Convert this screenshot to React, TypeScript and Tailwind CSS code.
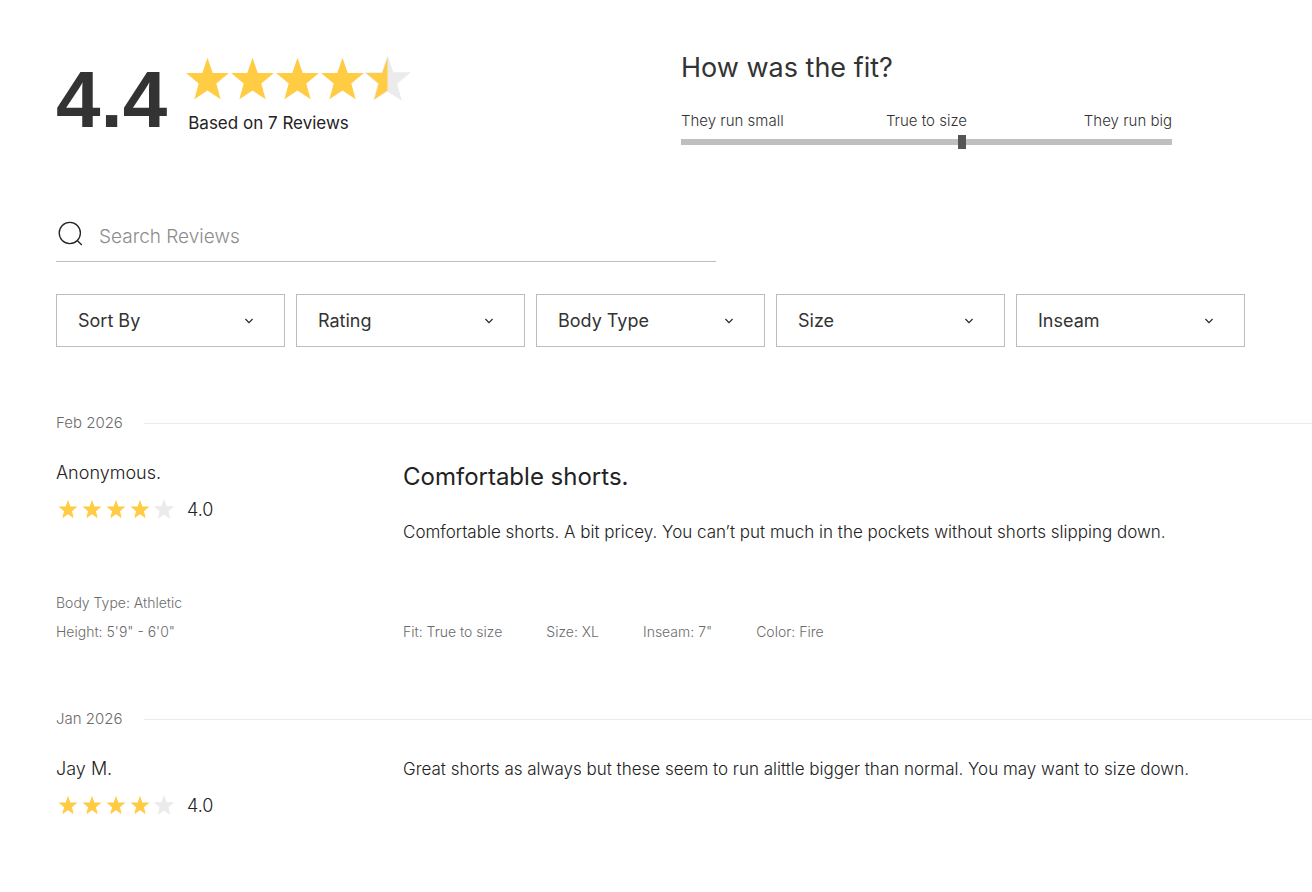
import React from "react";

const STAR =
  "M12 0.9 L14.8 9 L23.4 9.1 L16.7 14.6 L19 23 L12 18.4 L5 23 L7.3 14.6 L0.6 9.1 L9.2 9 Z";
const LEFT_HALF = "M12 0.9 L12 18.4 L5 23 L7.3 14.6 L0.6 9.1 L9.2 9 Z";

function Star({ size, fill }: { size: string; fill: "full" | "half" | "empty" }) {
  const full = fill === "full";
  return (
    <svg viewBox="0 0 24 24" className={`${size} shrink-0 overflow-visible`} aria-hidden="true">
      <path
        d={STAR}
        fill={full ? "#ffcc44" : "#ebebeb"}
        stroke={full ? "none" : "#ebebeb"}
        strokeWidth="0.8"
      />
      {fill === "half" && <path d={LEFT_HALF} fill="#ffcc44" />}
    </svg>
  );
}

function Filter({ label }: { label: string }) {
  return (
    <div className="relative h-[53px] flex-1">
      <select
        aria-label={label}
        className="h-full w-full appearance-none rounded-none border border-[#bdbdbd] bg-white px-[21px] text-[18px] text-[#333333]"
      >
        <option>{label}</option>
      </select>
      <svg
        viewBox="0 0 10 6"
        className="pointer-events-none absolute right-[31px] top-6 h-[6px] w-[10px]"
        fill="none"
        stroke="#222222"
        strokeWidth="1.1"
        aria-hidden="true"
      >
        <path d="M1.4 1 L5 4.6 L8.6 1" />
      </svg>
    </div>
  );
}

type ReviewProps = {
  date: string;
  name: string;
  title?: string;
  text: string;
  person?: string[];
  details?: string[];
};

function Review({ date, name, title, text, person, details }: ReviewProps) {
  return (
    <article className="mb-[61px]">
      <div className="flex h-6 items-center gap-5 text-[15px] font-light text-[#6b6b6b]">
        <time className="w-[68px] whitespace-nowrap">{date}</time>
        <div className="h-px flex-1 bg-[#ebebeb]" />
      </div>
      <div className="mt-[25px] grid grid-cols-[347px_1fr] text-[17px] font-light text-[#222222]">
        <div>
          <p className="text-[18px] leading-[26px]">{name}</p>
          <div className="mt-[11px] flex h-6 items-center">
            <div className="flex" role="img" aria-label="4 out of 5 stars">
              {[0, 1, 2, 3, 4].map((i) => (
                <div key={i} className="flex w-6 justify-center">
                  <Star size="size-5" fill={i < 4 ? "full" : "empty"} />
                </div>
              ))}
            </div>
            <span className="ml-[11px] text-[18px]">4.0</span>
          </div>
        </div>
        <div className="pr-10">
          {title && <h3 className="mb-[25px] text-[24px] leading-[34px] font-normal">{title}</h3>}
          <p className="leading-[26px]">{text}</p>
        </div>
      </div>
      {person && details && (
        <div className="mt-[43px] grid grid-cols-[347px_1fr] items-end text-[14px] leading-[29px] font-light text-[#6b6b6b]">
          <div>
            {person.map((line) => (
              <p key={line}>{line}</p>
            ))}
          </div>
          <ul className="flex gap-11">
            {details.map((d) => (
              <li key={d}>{d}</li>
            ))}
          </ul>
        </div>
      )}
    </article>
  );
}

export default function App() {
  return (
    <main className="bg-white pl-14 font-['Inter','Liberation_Sans',sans-serif] text-[#222222]">
      <header className="flex pt-[50px]">
        <div className="flex w-[625px] gap-[18px]">
          <div className="h-[100px] font-['Liberation_Sans',sans-serif] text-[80px] leading-[100px] font-bold text-[#333333]">
            4.4
          </div>
          <div>
            <div className="mt-[6px] flex" role="img" aria-label="4.4 out of 5 stars">
              {(["full", "full", "full", "full", "half"] as const).map((f, i) => (
                <Star key={i} size="size-[45px]" fill={f} />
              ))}
            </div>
            <p className="mt-[10px] pl-[3px] text-[17px] leading-6">Based on 7 Reviews</p>
          </div>
        </div>
        <div className="w-[491px] text-[#333333]">
          <h2 className="text-[27px] leading-9">How was the fit?</h2>
          <div className="mt-[25px] grid grid-cols-3 text-[15px] leading-5 font-light">
            <span>They run small</span>
            <label htmlFor="fit" className="text-center">
              True to size
            </label>
            <span className="text-right">They run big</span>
          </div>
          <input
            id="fit"
            type="range"
            min="0"
            max="1000"
            defaultValue="574"
            className="mt-1 block h-[14px] w-full appearance-none bg-transparent [&::-webkit-slider-runnable-track]:h-[6px] [&::-webkit-slider-runnable-track]:bg-[#bfbfbf] [&::-webkit-slider-thumb]:-mt-1 [&::-webkit-slider-thumb]:h-[14px] [&::-webkit-slider-thumb]:w-2 [&::-webkit-slider-thumb]:appearance-none [&::-webkit-slider-thumb]:bg-[#555555]"
          />
        </div>
      </header>

      <label className="mt-[60px] flex h-[52px] w-[660px] items-center gap-4 border-b border-[#bdbdbd]">
        <svg
          viewBox="0 0 26 26"
          className="mb-[3px] ml-[1px] size-[26px] shrink-0"
          fill="none"
          stroke="#222222"
          strokeWidth="1.3"
          aria-hidden="true"
        >
          <circle cx="12.8" cy="12" r="10.6" />
          <path d="M20.3 19.5 L24.8 24" />
        </svg>
        <input
          type="search"
          aria-label="Search Reviews"
          placeholder="Search Reviews"
          className="flex-1 pt-1 text-[19px] font-light outline-none placeholder:text-[#8c8c8c]"
        />
      </label>

      <div className="mt-8 mr-[67px] flex gap-[11px]">
        {["Sort By", "Rating", "Body Type", "Size", "Inseam"].map((f) => (
          <Filter key={f} label={f} />
        ))}
      </div>

      <section className="mt-16">
        <Review
          date="Feb 2026"
          name="Anonymous."
          title="Comfortable shorts."
          text="Comfortable shorts. A bit pricey. You can’t put much in the pockets without shorts slipping down."
          person={["Body Type: Athletic", `Height: 5'9" - 6'0"`]}
          details={["Fit: True to size", "Size: XL", `Inseam: 7"`, "Color: Fire"]}
        />
        <Review
          date="Jan 2026"
          name="Jay M."
          text="Great shorts as always but these seem to run alittle bigger than normal. You may want to size down."
        />
      </section>
    </main>
  );
}
